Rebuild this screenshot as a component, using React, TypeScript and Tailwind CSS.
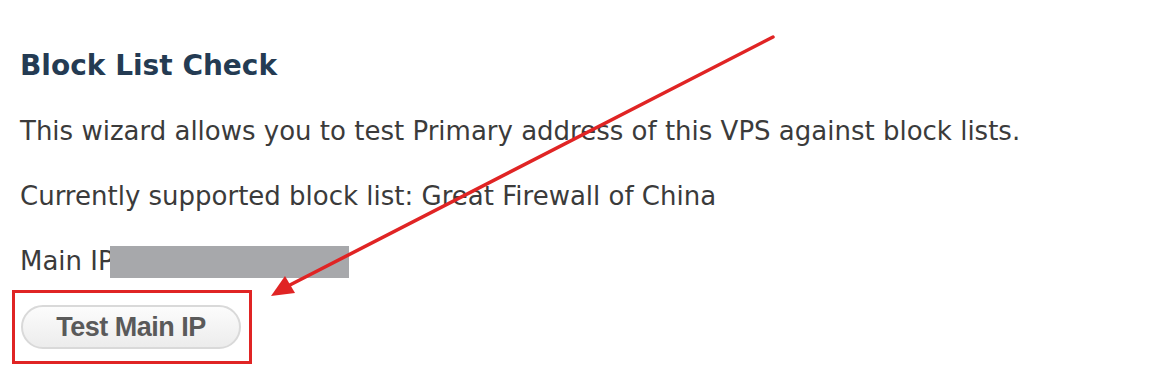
export default function App() {
  return (
    <div className="relative h-[372px] w-[1156px] overflow-hidden bg-white pl-[20px] pt-[48px] text-[#3b3b3b] [font-family:'DejaVu_Sans',Verdana,sans-serif]">
      <h2 className="text-[28px] font-bold leading-[36px] text-[#243b53]">Block List Check</h2>
      <div className="mt-[15px] text-[26px]">
        <p className="leading-[65px]">This wizard allows you to test Primary address of this VPS against block lists.</p>
        <p className="leading-[65px]">Currently supported block list: Great Firewall of China</p>
        <p className="leading-[65px]">
          Main IP
          <span className="-ml-[4px] inline-block h-[32px] w-[239px] bg-[#a7a8ab] align-[-8px]" />
        </p>
      </div>
      <div className="-ml-[8px] -mt-[4px] inline-block border-[3px] border-[#e02424] pb-[12px] pl-[6px] pr-[8px] pt-[12px]">
        <button className="h-[44px] w-[220px] rounded-full border-2 border-[#d9d9d9] bg-gradient-to-b from-[#fcfcfc] to-[#ececec] text-[27px] font-bold tracking-[-0.5px] text-[#5a5a5a] [font-family:'Liberation_Sans',Arial,sans-serif]">
          Test Main IP
        </button>
      </div>

      <svg className="pointer-events-none absolute left-0 top-0" width="1156" height="372" viewBox="0 0 1156 372">
        <line x1="773" y1="37" x2="286" y2="287" stroke="#e02424" strokeWidth="3.5" strokeLinecap="round" />
        <polygon points="271,296 285,276 295,293" fill="#e02424" />
      </svg>
    </div>
  );
}
